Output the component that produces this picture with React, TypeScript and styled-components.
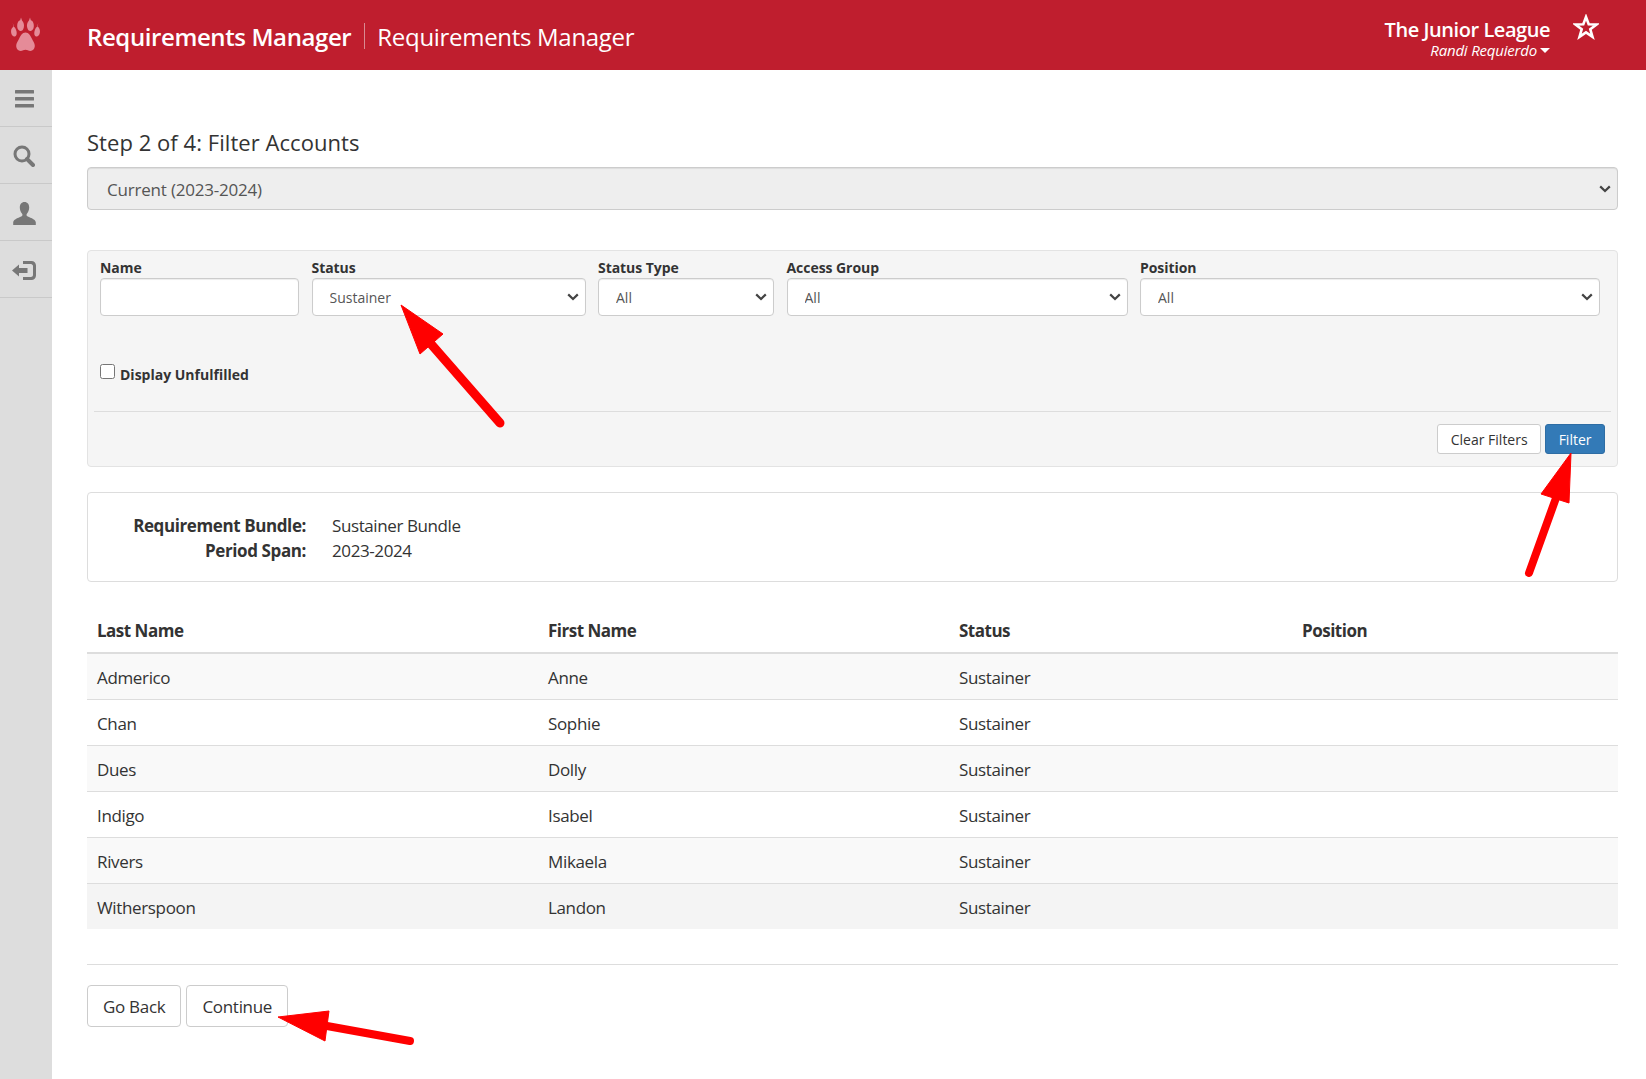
import React from "react";
import styled, { createGlobalStyle } from "styled-components";

const FONT = `"Open Sans", "Noto Sans", "Liberation Sans", sans-serif`;

const CHEVRON = `url("data:image/svg+xml,%3Csvg xmlns='http://www.w3.org/2000/svg' width='12' height='8' viewBox='0 0 12 8'%3E%3Cpath d='M1.2 1.400 6 6 10.800 1.400' fill='none' stroke='%23444' stroke-width='2.200'/%3E%3C/svg%3E")`;

const Global = createGlobalStyle`
  html, body { margin: 0; padding: 0; background: #fff; }
  body { font-family: ${FONT}; color: #333; overflow: hidden; }
  * { box-sizing: border-box; }
`;

const Page = styled.div`
  position: relative;
  width: 1646px;
  height: 1079px;
  overflow: hidden;
  display: grid;
  grid-template-rows: 70px 1fr;
  grid-template-columns: 52px 1fr;
`;

const TopBar = styled.header`
  grid-column: 1 / 3;
  background: #bf1e2e;
  color: #fff;
  display: flex;
  align-items: center;
`;

const LogoCell = styled.div`
  width: 87px;
  padding-left: 10px;
  display: flex;
  align-items: center;
`;

const AppName = styled.div<{ $strong?: boolean }>`
  font-size: 24px;
  letter-spacing: ${(p) => (p.$strong ? "-0.4px" : "-0.3px")};
  font-weight: ${(p) => (p.$strong ? 600 : 400)};
  line-height: 28px;
  margin-top: 3px;
`;

const Divider = styled.span`
  width: 1px;
  height: 26px;
  margin: 2px 12px 0 13px;
  background: #d98a92;
`;

const TopRight = styled.div`
  margin-left: auto;
  display: flex;
  align-items: flex-start;
  padding-right: 47px;
`;

const OrgBlock = styled.div`
  text-align: right;
  margin-right: 23px;
  padding-top: 6px;
`;

const OrgName = styled.div`
  font-size: 20px;
  font-weight: 600;
  letter-spacing: -0.45px;
  line-height: 24px;
`;

const UserName = styled.div`
  font-size: 15px;
  font-style: italic;
  letter-spacing: -0.2px;
  line-height: 17px;
  display: flex;
  align-items: center;
  justify-content: flex-end;
`;

const Caret = styled.span`
  display: inline-block;
  margin-left: 3px;
  border-left: 5px solid transparent;
  border-right: 5px solid transparent;
  border-top: 5px solid #fff;
`;

const StarSlot = styled.div`
  padding-top: 2px;
`;

const Side = styled.nav`
  background: #ddd;
  display: flex;
  flex-direction: column;
`;

const SideItem = styled.div`
  height: 57px;
  border-bottom: 1px solid #c9c9c9;
  display: flex;
  align-items: center;
  justify-content: center;
  padding: 2px 4px 0 0;
  color: #777;
`;

const Main = styled.main`
  padding: 58px 28px 0 35px;
  display: flex;
  flex-direction: column;
`;

const Title = styled.h2`
  margin: 0 0 10px;
  font-size: 22px;
  font-weight: 400;
  letter-spacing: 0.05px;
  line-height: 29px;
  color: #333;
`;

const PeriodSelect = styled.select`
  appearance: none;
  width: 100%;
  height: 43px;
  font: 17px ${FONT};
  letter-spacing: -0.2px;
  color: #555;
  background: #eee ${CHEVRON} no-repeat right 6px center;
  border: 1px solid #ccc;
  border-radius: 4px;
  padding: 2px 24px 0 19px;
  opacity: 1;
  box-shadow: inset 0 1px 1px rgba(0, 0, 0, 0.075);
`;

const FilterPanel = styled.section`
  margin-top: 40px;
  height: 217px;
  background: #f5f5f5;
  border: 1px solid #e3e3e3;
  border-radius: 4px;
  padding: 7px 6px 0;
  display: flex;
  flex-direction: column;
`;

const FieldRow = styled.div`
  display: grid;
  grid-template-columns: 199px 274px 176px 341px 460px;
  column-gap: 12.500px;
  padding: 0 6px;
`;

const Field = styled.label`
  display: flex;
  flex-direction: column;
`;

const FieldLabel = styled.span`
  font-size: 14px;
  font-weight: 700;
  letter-spacing: -0.05px;
  line-height: 19px;
  color: #333;
`;

const TextBox = styled.input`
  height: 38px;
  margin-top: 1px;
  background: #fff;
  border: 1px solid #ccc;
  border-radius: 4px;
  box-shadow: inset 0 1px 1px rgba(0, 0, 0, 0.075);
`;

const SmallSelect = styled.select`
  appearance: none;
  height: 38px;
  margin-top: 1px;
  width: 100%;
  font: 14px ${FONT};
  color: #555;
  background: #fff ${CHEVRON} no-repeat right 6px center;
  border: 1px solid #ccc;
  border-radius: 4px;
  padding: 0 24px 0 17px;
  box-shadow: inset 0 1px 1px rgba(0, 0, 0, 0.075);
`;

const CheckLine = styled.label`
  display: flex;
  align-items: flex-start;
  margin: 48px 0 0 6px;
  font-size: 14px;
  font-weight: 700;
  line-height: 19px;
  color: #333;
`;

const Check = styled.input`
  width: 15px;
  height: 15px;
  margin: 0 5px 0 0;
`;

const CheckText = styled.span`
  padding-top: 1px;
`;

const PanelRule = styled.hr`
  margin: 27px 0 0;
  border: 0;
  border-top: 1px solid #ddd;
`;

const PanelActions = styled.div`
  display: flex;
  justify-content: flex-end;
  gap: 4px;
  padding: 12px 6px 0 0;
`;

const SmallButton = styled.button<{ $primary?: boolean }>`
  height: 30px;
  padding: 0 12.500px;
  font: 14px ${FONT};
  border-radius: 3px;
  border: 1px solid ${(p) => (p.$primary ? "#2e6da4" : "#ccc")};
  background: ${(p) => (p.$primary ? "#337ab7" : "#fff")};
  color: ${(p) => (p.$primary ? "#fff" : "#333")};
`;

const InfoPanel = styled.section`
  margin-top: 25px;
  height: 90px;
  border: 1px solid #ddd;
  border-radius: 4px;
  padding: 20px 0 0;
  display: grid;
  grid-template-columns: 218px 1fr;
  column-gap: 26px;
  font-size: 17px;
  letter-spacing: -0.4px;
  line-height: 25px;
  align-content: start;
`;

const InfoKey = styled.div`
  text-align: right;
  font-weight: 700;
`;

const InfoValue = styled.div``;

const Table = styled.table`
  margin-top: 24px;
  width: 100%;
  border-collapse: collapse;
  table-layout: fixed;
  font-size: 17px;
  letter-spacing: -0.35px;
  line-height: 25px;
`;

const HeadCell = styled.th`
  text-align: left;
  font-weight: 700;
  height: 47px;
  padding: 3px 10px 0;
  letter-spacing: -0.5px;
  border-bottom: 2px solid #ddd;
`;

const Row = styled.tr`
  &:nth-child(odd) { background: #f9f9f9; }
  &:last-child { background: #f4f4f4; }
  & + & td { border-top: 1px solid #ddd; }
`;

const Cell = styled.td`
  height: 46px;
  padding: 2px 10px 0;
`;

const BottomRule = styled.hr`
  margin: 35px 0 0;
  border: 0;
  border-top: 1px solid #ddd;
`;

const FormActions = styled.div`
  display: flex;
  gap: 5px;
  margin-top: 20px;
`;

const BigButton = styled.button`
  height: 42px;
  padding: 0 15px;
  font: 17px ${FONT};
  letter-spacing: -0.3px;
  background: #fff;
  color: #333;
  border: 1px solid #ccc;
  border-radius: 4px;
`;

const ArrowLayer = styled.svg`
  position: absolute;
  inset: 0;
  pointer-events: none;
`;

const Paw = () => (
  <svg width="30" height="36" viewBox="0 0 30 36" fill="#e58b98">
    <path d="M11 0.500 12 3.500 C13.800 5 14.400 8 13.800 10.500 C13.200 13.200 11.700 14.500 10 14 C7.800 13.300 7 10.500 7.200 8 C7.400 5.500 8.500 3.800 10.200 3.300z" />
    <path d="M20 0.500 19 3.500 C17.200 5 16.600 8 17.200 10.500 C17.800 13.200 19.300 14.500 21 14 C23.200 13.300 24 10.500 23.800 8 C23.600 5.500 22.500 3.800 20.800 3.300z" />
    <path d="M2.800 6 3.300 9.800 C1.400 11 0.700 13.500 1.200 16 C1.700 18.500 3.300 20 5 19.500 C6.700 19 7 16.600 6.500 14.300 C6 12 4.800 10.300 3.800 9.800z" />
    <path d="M28.200 6 27.700 9.800 C29.600 11 30.300 13.500 29.800 16 C29.300 18.500 27.700 20 26 19.500 C24.300 19 24 16.600 24.500 14.300 C25 12 26.200 10.300 27.200 9.800z" />
    <path d="M15.500 15.500c3.400 0 5 3.300 6.300 6 1.300 2.700 3 4.700 3 7.300 0 3-2 5.200-4.400 5.200-2 0-3.200-1.200-4.900-1.200s-2.900 1.200-4.900 1.200c-2.400 0-4.400-2.200-4.400-5.200 0-2.600 1.700-4.600 3-7.300 1.300-2.700 2.900-6 6.300-6z" />
  </svg>
);

const BarsIcon = () => (
  <svg width="19" height="18" viewBox="0 0 19 18" fill="#777">
    <rect x="0" y="0" width="19" height="3.600" rx="0.5" />
    <rect x="0" y="7" width="19" height="3.600" rx="0.5" />
    <rect x="0" y="14" width="19" height="3.600" rx="0.5" />
  </svg>
);

const SearchIcon = () => (
  <svg width="22" height="22" viewBox="0 0 22 22" fill="none" stroke="#777">
    <circle cx="9" cy="9" r="7" strokeWidth="3" />
    <path d="M14 14l6 6" strokeWidth="4" strokeLinecap="round" />
  </svg>
);

const UserIcon = () => (
  <svg width="23" height="23" viewBox="0 0 23 23" fill="#777">
    <path d="M11.500 0c3 0 4.700 2.300 4.700 5.500 0 2.600-1 4.800-2.300 6.200-.5.600-.5 1.700.1 2.200 1.500 1.200 8.800 3 8.800 6.300V23H.2v-2.800c0-3.300 7.300-5.100 8.800-6.300.6-.5.6-1.600.1-2.200C7.800 10.300 6.800 8.100 6.800 5.500 6.800 2.300 8.500 0 11.500 0z" />
  </svg>
);

const LogOutIcon = () => (
  <svg width="24" height="21" viewBox="0 0 24 21" fill="#777">
    <path d="M11 1h8.500C22 1 24 3 24 5.500v10c0 2.500-2 4.500-4.500 4.500H11v-3h8c.9 0 2-1 2-2V6c0-1-1.100-2-2-2h-8z" />
    <path d="M0 10.500 7 4.500V8h8.500v5H7v3.500z" />
  </svg>
);

const StarIcon = () => (
  <svg width="26" height="26" viewBox="0 0 26 26" fill="none" stroke="#fff" strokeWidth="2.600" strokeLinejoin="miter">
    <polygon points="13,3 15.700,10.300 23.500,10.500 17.300,15.300 19.500,22.800 13,18.400 6.500,22.800 8.700,15.300 2.500,10.500 10.300,10.300" />
  </svg>
);

type ArrowProps = { tip: string; a: string; b: string; neck: string; end: string; width: number };

const Arrow = ({ tip, a, b, neck, end, width }: ArrowProps) => {
  const [nx, ny] = neck.split(",");
  const [ex, ey] = end.split(",");
  return (
    <g fill="#ff0000" stroke="#ff0000">
      <polygon points={`${tip} ${a} ${b}`} strokeWidth="1" />
      <line x1={nx} y1={ny} x2={ex} y2={ey} strokeWidth={width} strokeLinecap="round" />
    </g>
  );
};

const rows = [
  ["Admerico", "Anne"],
  ["Chan", "Sophie"],
  ["Dues", "Dolly"],
  ["Indigo", "Isabel"],
  ["Rivers", "Mikaela"],
  ["Witherspoon", "Landon"],
];

export default function App() {
  return (
    <Page>
      <Global />
      <TopBar>
        <LogoCell>
          <Paw />
        </LogoCell>
        <AppName $strong>Requirements Manager</AppName>
        <Divider />
        <AppName>Requirements Manager</AppName>
        <TopRight>
          <OrgBlock>
            <OrgName>The Junior League</OrgName>
            <UserName>
              Randi Requierdo
              <Caret />
            </UserName>
          </OrgBlock>
          <StarSlot>
            <StarIcon />
          </StarSlot>
        </TopRight>
      </TopBar>
      <Side>
        <SideItem><BarsIcon /></SideItem>
        <SideItem><SearchIcon /></SideItem>
        <SideItem><UserIcon /></SideItem>
        <SideItem><LogOutIcon /></SideItem>
      </Side>
      <Main>
        <Title>Step 2 of 4: Filter Accounts</Title>
        <PeriodSelect disabled defaultValue="current">
          <option value="current">Current (2023-2024)</option>
        </PeriodSelect>
        <FilterPanel>
          <FieldRow>
            <Field>
              <FieldLabel>Name</FieldLabel>
              <TextBox type="text" />
            </Field>
            <Field>
              <FieldLabel>Status</FieldLabel>
              <SmallSelect defaultValue="s"><option value="s">Sustainer</option></SmallSelect>
            </Field>
            <Field>
              <FieldLabel>Status Type</FieldLabel>
              <SmallSelect defaultValue="a"><option value="a">All</option></SmallSelect>
            </Field>
            <Field>
              <FieldLabel>Access Group</FieldLabel>
              <SmallSelect defaultValue="a"><option value="a">All</option></SmallSelect>
            </Field>
            <Field>
              <FieldLabel>Position</FieldLabel>
              <SmallSelect defaultValue="a"><option value="a">All</option></SmallSelect>
            </Field>
          </FieldRow>
          <CheckLine>
            <Check type="checkbox" />
            <CheckText>Display Unfulfilled</CheckText>
          </CheckLine>
          <PanelRule />
          <PanelActions>
            <SmallButton>Clear Filters</SmallButton>
            <SmallButton $primary>Filter</SmallButton>
          </PanelActions>
        </FilterPanel>
        <InfoPanel>
          <InfoKey>Requirement Bundle:</InfoKey>
          <InfoValue>Sustainer Bundle</InfoValue>
          <InfoKey>Period Span:</InfoKey>
          <InfoValue>2023-2024</InfoValue>
        </InfoPanel>
        <Table>
          <colgroup>
            <col style={{ width: 451 }} />
            <col style={{ width: 411 }} />
            <col style={{ width: 343 }} />
            <col />
          </colgroup>
          <thead>
            <tr>
              <HeadCell>Last Name</HeadCell>
              <HeadCell>First Name</HeadCell>
              <HeadCell>Status</HeadCell>
              <HeadCell>Position</HeadCell>
            </tr>
          </thead>
          <tbody>
            {rows.map(([last, first]) => (
              <Row key={last}>
                <Cell>{last}</Cell>
                <Cell>{first}</Cell>
                <Cell>Sustainer</Cell>
                <Cell />
              </Row>
            ))}
          </tbody>
        </Table>
        <BottomRule />
        <FormActions>
          <BigButton>Go Back</BigButton>
          <BigButton>Continue</BigButton>
        </FormActions>
      </Main>
      <ArrowLayer width="1646" height="1079" viewBox="0 0 1646 1079">
        <Arrow tip="401,305" a="443,334" b="420,354" neck="431,344" end="500,423" width={9} />
        <Arrow tip="1571,453" a="1541,494" b="1569,503" neck="1556,498" end="1529,573" width={8} />
        <Arrow tip="278,1017" a="329,1011" b="325,1041" neck="327,1026" end="410,1041" width={8} />
      </ArrowLayer>
    </Page>
  );
}
